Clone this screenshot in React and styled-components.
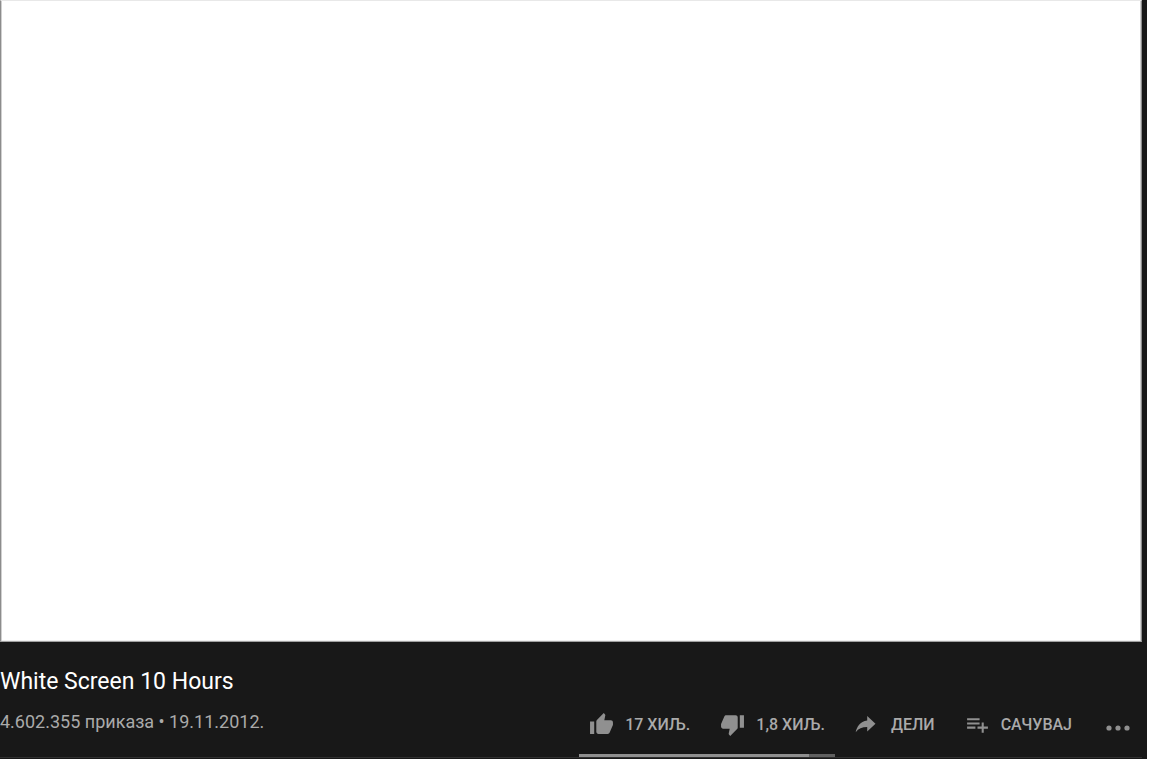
import React from "react";
import styled, { createGlobalStyle } from "styled-components";

const GlobalStyle = createGlobalStyle`
  body {
    margin: 0;
    background: #ffffff;
    font-family: Roboto, "Liberation Sans", sans-serif;
  }
`

const Page = styled.main`
  min-height: 100vh;
  box-sizing: border-box;
  margin-right: 5px;
  padding-right: 5px;
  background: #181818;
`

const Player = styled.section`
  aspect-ratio: 16 / 9;
  box-sizing: border-box;
  background: #ffffff;
  border: 1px solid #8c8c8c;
  border-top-color: #e8e8e8;
  border-bottom-color: #a0a0a0;
  box-shadow: inset 1px 0 #d0d0d0, inset -1px 0 #d0d0d0, inset 0 -1px #eeeeee;
`

const Info = styled.section`
  padding-top: 25px;
  border-bottom: 1px solid #303030;
`

const Title = styled.h1`
  margin: 0;
  color: #ffffff;
  font-size: 23px;
  font-weight: 400;
  line-height: 30px;
`

const Details = styled.div`
  display: flex;
  justify-content: space-between;
  align-items: flex-start;
`

const Meta = styled.p`
  margin: 11px 0 0;
  color: #aaaaaa;
  font-size: 18px;
  line-height: 28px;
`

const Actions = styled.div`
  display: flex;
  gap: 10px;
`

const Sentiment = styled.div`
  display: flex;
  flex-direction: column;
`

const Votes = styled.div`
  display: flex;
  gap: 10px;
`

const SentimentTrack = styled.div`
  height: 3px;
  background: #606060;
`

const SentimentFill = styled.div`
  height: 100%;
  background: #909090;
`

const ActionButton = styled.button`
  display: flex;
  align-items: center;
  gap: 11px;
  height: 57px;
  padding: 0 10px 2px;
  border: 0;
  background: none;
  color: #aaaaaa;
  font-family: inherit;
  font-size: 16px;
  font-weight: 500;
  line-height: 20px;
  white-space: nowrap;
  cursor: pointer;
`

const MoreButton = styled(ActionButton)`
  padding-top: 6px;
`

const Icon = styled.svg`
  flex: none;
  width: ${(props) => props.$size || 25}px;
  height: ${(props) => props.$size || 25}px;
  fill: #909090;
`

const likes = 17000;
const dislikes = 1900;

const App = () => {
  const ratio = (likes / (likes + dislikes)) * 100;

  return (
    <>
      <GlobalStyle />
      <Page>
        <Player aria-label="White Screen 10 Hours" />
        <Info>
          <Title>White Screen 10 Hours</Title>
          <Details>
            <Meta>4.602.355 приказа • 19.11.2012.</Meta>
            <Actions>
              <Sentiment>
                <Votes>
                  <ActionButton type="button">
                    <Icon viewBox="0 0 24 24" aria-hidden="true">
                      <path d="M1 21h4V9H1v12zm22-11c0-1.1-.9-2-2-2h-6.31l.95-4.57.03-.32c0-.41-.17-.79-.44-1.06L14.17 1 7.59 7.59C7.22 7.95 7 8.45 7 9v10c0 1.1.9 2 2 2h9c.83 0 1.54-.5 1.84-1.22l3.02-7.05c.09-.23.14-.47.14-.73v-2z" />
                    </Icon>
                    17 ХИЉ.
                  </ActionButton>
                  <ActionButton type="button">
                    <Icon viewBox="0 0 24 24" aria-hidden="true">
                      <path d="M15 3H6c-.83 0-1.54.5-1.84 1.22l-3.02 7.05c-.09.23-.14.47-.14.73v2c0 1.1.9 2 2 2h6.31l-.95 4.57-.03.32c0 .41.17.79.44 1.06L9.83 23l6.59-6.59c.36-.36.58-.86.58-1.41V5c0-1.1-.9-2-2-2zm4 0v12h4V3h-4z" />
                    </Icon>
                    1,8 ХИЉ.
                  </ActionButton>
                </Votes>
                <SentimentTrack>
                  <SentimentFill style={{ width: `${ratio}%` }} />
                </SentimentTrack>
              </Sentiment>
              <ActionButton type="button">
                <Icon viewBox="0 0 25 25" aria-hidden="true">
                  <path d="M12.2 8.4V4l8.3 7.8-8.3 7.6v-4.3C7.1 15.1 3.4 16.6.7 20.2c1-5.3 4.3-10.7 11.5-11.8z" />
                </Icon>
                ДЕЛИ
              </ActionButton>
              <ActionButton type="button">
                <Icon viewBox="0 0 24 24" aria-hidden="true">
                  <path d="M14 10H2v2h12v-2zm0-4H2v2h12V6zm4 8v-4h-2v4h-4v2h4v4h2v-4h4v-2h-4zM2 16h8v-2H2v2z" />
                </Icon>
                САЧУВАЈ
              </ActionButton>
              <MoreButton type="button" aria-label="Још радњи">
                <Icon $size={30} viewBox="0 0 30 30" aria-hidden="true">
                  <circle cx="7" cy="15" r="2.6" />
                  <circle cx="16" cy="15" r="2.6" />
                  <circle cx="25" cy="15" r="2.6" />
                </Icon>
              </MoreButton>
            </Actions>
          </Details>
        </Info>
      </Page>
    </>
  )
}

export default App;
